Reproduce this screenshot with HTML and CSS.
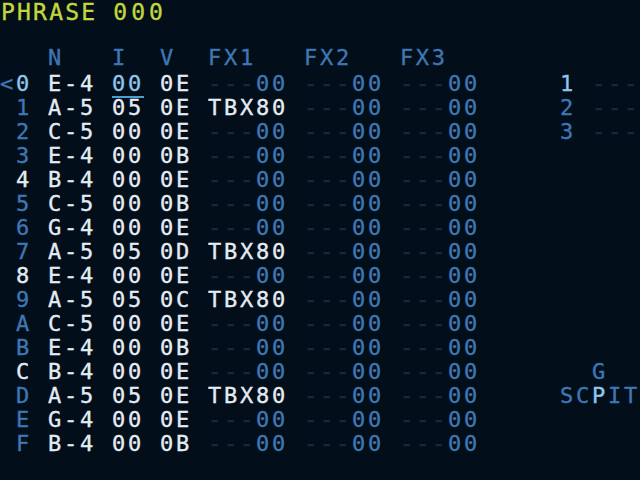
FILE: index.html
```html
<!DOCTYPE html>
<html>
<head>
<meta charset="utf-8">
<link rel="stylesheet" href="styles.css">
</head>
<body>
<div class="screen">
  <div class="title"><span>PHRASE</span><span class="num">000</span></div>
  <div class="head b">   N   I  V  FX1   FX2   FX3</div>
  <div class="rows">
    <div class="row"><span class="b">&lt;</span><span class="l">0</span> <span class="w">E-4</span> <span class="l cur">00</span> <span class="w">0E</span> <span class="d">---</span><span class="b">00</span> <span class="d">---</span><span class="b">00</span> <span class="d">---</span><span class="b">00</span>     <span class="l">1</span> <span class="d">---</span></div>
    <div class="row"> <span class="b">1</span> <span class="w">A-5</span> <span class="w">05</span> <span class="w">0E</span> <span class="w">TBX80</span> <span class="d">---</span><span class="b">00</span> <span class="d">---</span><span class="b">00</span>     <span class="b">2</span> <span class="d">---</span></div>
    <div class="row"> <span class="b">2</span> <span class="w">C-5</span> <span class="w">00</span> <span class="w">0E</span> <span class="d">---</span><span class="b">00</span> <span class="d">---</span><span class="b">00</span> <span class="d">---</span><span class="b">00</span>     <span class="b">3</span> <span class="d">---</span></div>
    <div class="row"> <span class="b">3</span> <span class="w">E-4</span> <span class="w">00</span> <span class="w">0B</span> <span class="d">---</span><span class="b">00</span> <span class="d">---</span><span class="b">00</span> <span class="d">---</span><span class="b">00</span></div>
    <div class="row"> <span class="w">4</span> <span class="w">B-4</span> <span class="w">00</span> <span class="w">0E</span> <span class="d">---</span><span class="b">00</span> <span class="d">---</span><span class="b">00</span> <span class="d">---</span><span class="b">00</span></div>
    <div class="row"> <span class="b">5</span> <span class="w">C-5</span> <span class="w">00</span> <span class="w">0B</span> <span class="d">---</span><span class="b">00</span> <span class="d">---</span><span class="b">00</span> <span class="d">---</span><span class="b">00</span></div>
    <div class="row"> <span class="b">6</span> <span class="w">G-4</span> <span class="w">00</span> <span class="w">0E</span> <span class="d">---</span><span class="b">00</span> <span class="d">---</span><span class="b">00</span> <span class="d">---</span><span class="b">00</span></div>
    <div class="row"> <span class="b">7</span> <span class="w">A-5</span> <span class="w">05</span> <span class="w">0D</span> <span class="w">TBX80</span> <span class="d">---</span><span class="b">00</span> <span class="d">---</span><span class="b">00</span></div>
    <div class="row"> <span class="w">8</span> <span class="w">E-4</span> <span class="w">00</span> <span class="w">0E</span> <span class="d">---</span><span class="b">00</span> <span class="d">---</span><span class="b">00</span> <span class="d">---</span><span class="b">00</span></div>
    <div class="row"> <span class="b">9</span> <span class="w">A-5</span> <span class="w">05</span> <span class="w">0C</span> <span class="w">TBX80</span> <span class="d">---</span><span class="b">00</span> <span class="d">---</span><span class="b">00</span></div>
    <div class="row"> <span class="b">A</span> <span class="w">C-5</span> <span class="w">00</span> <span class="w">0E</span> <span class="d">---</span><span class="b">00</span> <span class="d">---</span><span class="b">00</span> <span class="d">---</span><span class="b">00</span></div>
    <div class="row"> <span class="b">B</span> <span class="w">E-4</span> <span class="w">00</span> <span class="w">0B</span> <span class="d">---</span><span class="b">00</span> <span class="d">---</span><span class="b">00</span> <span class="d">---</span><span class="b">00</span></div>
    <div class="row"> <span class="w">C</span> <span class="w">B-4</span> <span class="w">00</span> <span class="w">0E</span> <span class="d">---</span><span class="b">00</span> <span class="d">---</span><span class="b">00</span> <span class="d">---</span><span class="b">00</span>       <span class="b">G</span></div>
    <div class="row"> <span class="b">D</span> <span class="w">A-5</span> <span class="w">05</span> <span class="w">0E</span> <span class="w">TBX80</span> <span class="d">---</span><span class="b">00</span> <span class="d">---</span><span class="b">00</span>     <span class="b">SC</span><span class="l">P</span><span class="b">IT</span></div>
    <div class="row"> <span class="b">E</span> <span class="w">G-4</span> <span class="w">00</span> <span class="w">0E</span> <span class="d">---</span><span class="b">00</span> <span class="d">---</span><span class="b">00</span> <span class="d">---</span><span class="b">00</span></div>
    <div class="row"> <span class="b">F</span> <span class="w">B-4</span> <span class="w">00</span> <span class="w">0B</span> <span class="d">---</span><span class="b">00</span> <span class="d">---</span><span class="b">00</span> <span class="d">---</span><span class="b">00</span></div>
  </div>
</div>
</body>
</html>
```
FILE: styles.css
```css
html, body {
  margin: 0;
  padding: 0;
  background: #020e19;
}
.screen {
  width: 640px;
  height: 480px;
  overflow: hidden;
  background: #020e19;
  font-family: "DejaVu Sans Mono", monospace;
  font-size: 22px;
  letter-spacing: 2.75px;
  -webkit-text-stroke: 0.35px currentColor;
  color: #e4ecf3;
}
.title, .head, .row {
  white-space: pre;
  height: 24px;
  line-height: 24px;
}
.title {
  padding-left: 1px;
  color: #c2d73d;
  font-size: 23px;
  letter-spacing: 2.2px;
}
.title .num {
  margin-left: 16px;
  letter-spacing: 4px;
}
.head {
  margin-top: 22px;
}
.rows {
  margin-top: 2px;
}
.b { color: #3e77b4; }
.l { color: #8fc6ec; }
.w { color: #e4ecf3; }
.d { color: #11303f; }
.cur {
  border-bottom: 2px solid #4e9dd2;
}
```
